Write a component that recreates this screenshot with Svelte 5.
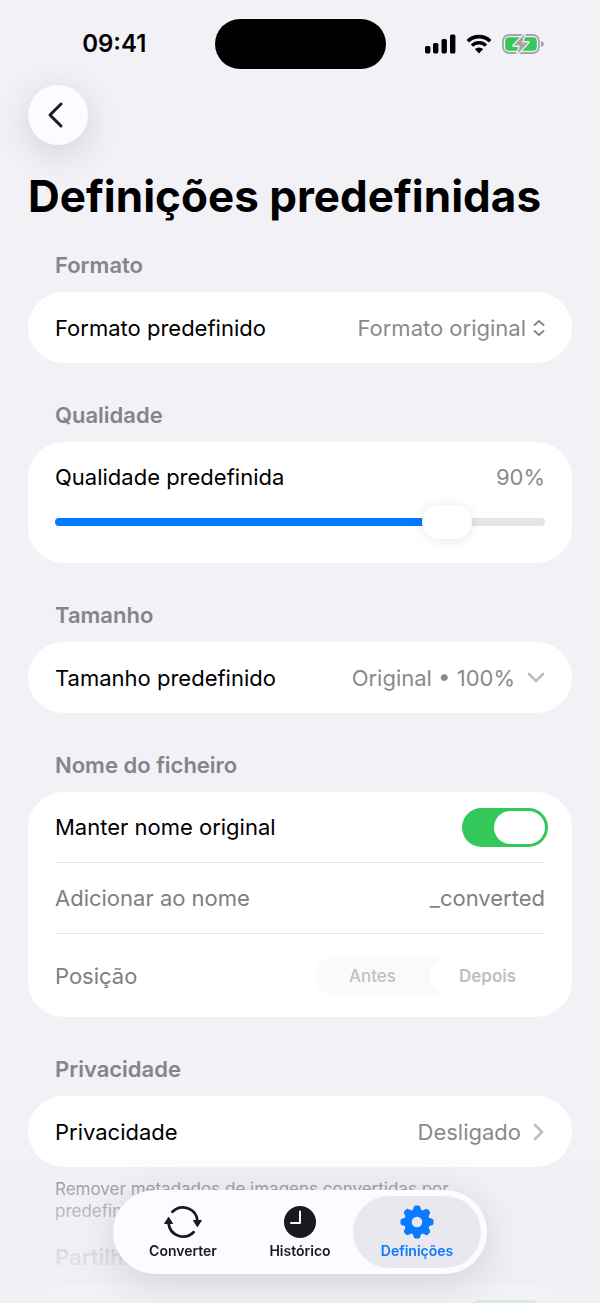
<script>
  let format = 'original';
  let quality = 90;
  let keepName = true;
  let suffix = '_converted';
  let position = 'after';
  let stripShared = true;

  const minQuality = 40;
  const maxQuality = 100;

  const teeth = [0, 45, 90, 135, 180, 225, 270, 315];

  $: filled = ((quality - minQuality) / (maxQuality - minQuality)) * 100;
</script>

<div class="screen">
  <div class="status">
    <span class="time">09:41</span>
    <div class="island"></div>
    <div class="indicators">
      <svg width="31" height="20" viewBox="0 0 31 20" aria-hidden="true">
        <rect x="0" y="12" width="5.4" height="7.4" rx="1.6" />
        <rect x="8" y="9" width="5.4" height="10.4" rx="1.6" />
        <rect x="16.5" y="5" width="5.4" height="14.4" rx="1.6" />
        <rect x="25" y="0.5" width="5.4" height="19" rx="1.6" />
      </svg>
      <svg width="26" height="20" viewBox="0 0 26 20" aria-hidden="true">
        <path d="M1.8 7.2a16 16 0 0 1 22.4 0" fill="none" stroke="#000" stroke-width="3.6" />
        <path d="M6 11.6a10 10 0 0 1 14 0" fill="none" stroke="#000" stroke-width="3.4" />
        <path d="M13 19.4l-4.2-4.3a6 6 0 0 1 8.4 0z" />
      </svg>
      <svg width="42" height="20" viewBox="0 0 42 20" aria-hidden="true">
        <rect x="1" y="1" width="36" height="18" rx="6" fill="none" stroke="#a5a5aa" stroke-width="1.8" />
        <path d="M39 7v6q3-1 3-3t-3-3z" fill="#a5a5aa" />
        <rect x="3.2" y="3.2" width="31.6" height="13.6" rx="4" fill="#34c759" />
        <path
          d="M22.5 0L11.5 11.6h6.3L15.5 20L26.5 8.4h-6.3z"
          fill="#a5a5aa"
          stroke="#f2f1f6"
          stroke-width="2.6"
          stroke-linejoin="round"
          paint-order="stroke"
        />
      </svg>
    </div>
  </div>

  <header>
    <button class="back" aria-label="Voltar">
      <svg width="18" height="28" viewBox="0 0 18 28" aria-hidden="true">
        <path d="M14 3L3 14l11 11" fill="none" stroke="#1a1a1e" stroke-width="3" stroke-linecap="round" stroke-linejoin="round" />
      </svg>
    </button>
    <h1>Definições predefinidas</h1>
  </header>

  <main>
    <section>
      <h2>Formato</h2>
      <div class="card">
        <div class="row">
          <label for="format">Formato predefinido</label>
          <div class="value picker">
            <select id="format" bind:value={format}>
              <option value="original">Formato original</option>
            </select>
            <svg width="12" height="18" viewBox="0 0 12 18" aria-hidden="true">
              <path d="M1.5 6L6 2l4.5 4M1.5 12L6 16l4.5-4" fill="none" stroke="currentColor" stroke-width="2" stroke-linecap="round" stroke-linejoin="round" />
            </svg>
          </div>
        </div>
      </div>
    </section>

    <section>
      <h2>Qualidade</h2>
      <div class="card quality">
        <div class="quality-head">
          <label for="quality">Qualidade predefinida</label>
          <output class="value" for="quality">{quality}%</output>
        </div>
        <input
          id="quality"
          class="slider"
          type="range"
          min={minQuality}
          max={maxQuality}
          bind:value={quality}
          style:--filled="{filled}%"
        />
      </div>
    </section>

    <section>
      <h2>Tamanho</h2>
      <div class="card">
        <button class="row">
          <span>Tamanho predefinido</span>
          <span class="value spaced">
            Original • 100%
            <svg width="18" height="12" viewBox="0 0 18 12" aria-hidden="true">
              <path d="M2 2l7 7 7-7" fill="none" stroke="#bdbdc1" stroke-width="2.5" stroke-linecap="round" stroke-linejoin="round" />
            </svg>
          </span>
        </button>
      </div>
    </section>

    <section>
      <h2>Nome do ficheiro</h2>
      <div class="card">
        <div class="row short">
          <label for="keep">Manter nome original</label>
          <input id="keep" class="toggle" type="checkbox" bind:checked={keepName} />
        </div>
        <div class="row" class:off={keepName}>
          <label for="suffix">Adicionar ao nome</label>
          <input id="suffix" class="suffix" type="text" bind:value={suffix} disabled={keepName} />
        </div>
        <div class="row tall" class:off={keepName}>
          <span id="position">Posição</span>
          <div class="segments" role="radiogroup" aria-labelledby="position">
            <label class:chosen={position === 'before'}>
              <input type="radio" value="before" bind:group={position} disabled={keepName} />
              Antes
            </label>
            <label class:chosen={position === 'after'}>
              <input type="radio" value="after" bind:group={position} disabled={keepName} />
              Depois
            </label>
          </div>
        </div>
      </div>
    </section>

    <section>
      <h2>Privacidade</h2>
      <div class="card">
        <a class="row" href="#privacidade">
          <span>Privacidade</span>
          <span class="value spaced">
            Desligado
            <svg width="12" height="18" viewBox="0 0 12 18" aria-hidden="true">
              <path d="M2 2l7 7-7 7" fill="none" stroke="#bdbdc1" stroke-width="2.5" stroke-linecap="round" stroke-linejoin="round" />
            </svg>
          </span>
        </a>
      </div>
      <p class="note">Remover metadados de imagens convertidas por predefinição.</p>
    </section>

    <section class="after-note">
      <h2 id="share">Partilha</h2>
      <div class="card">
        <div class="row end">
          <input class="toggle" type="checkbox" aria-labelledby="share" bind:checked={stripShared} />
        </div>
      </div>
    </section>
  </main>
</div>

<div class="fade"></div>

<nav class="tabs">
  <a href="#converter">
    <svg width="38" height="34" viewBox="0 0 38 34" aria-hidden="true">
      <path d="M8.5 6.8A14.6 14.6 0 0 1 33.4 15.5M4.6 18.5A14.6 14.6 0 0 0 29.5 27.2" fill="none" stroke="currentColor" stroke-width="2.8" stroke-linecap="round" />
      <path d="M29.4 15.5h8l-4 6.2zM0.600 18.5h8l-4-6.2z" fill="currentColor" stroke="currentColor" stroke-linejoin="round" />
    </svg>
    Converter
  </a>
  <a href="#historico">
    <svg width="34" height="34" viewBox="0 0 34 34" aria-hidden="true">
      <circle cx="17" cy="17" r="16" fill="currentColor" />
      <path d="M17 6.5V18H8" fill="none" stroke="#fcfbff" stroke-width="2" stroke-linecap="round" stroke-linejoin="round" />
    </svg>
    Histórico
  </a>
  <a href="#definicoes" class="active" aria-current="page">
    <svg width="34" height="34" viewBox="0 0 34 34" aria-hidden="true">
      <circle cx="17" cy="17" r="9" fill="none" stroke="currentColor" stroke-width="7.4" />
      {#each teeth as angle}
        <path d="M12.4 6L13.8 2Q14.3 0.5 15.6 0.5H18.4Q19.7 0.5 20.2 2L21.6 6z" fill="currentColor" transform="rotate({angle} 17 17)" />
      {/each}
    </svg>
    Definições
  </a>
</nav>

<style>
  :global(body) {
    margin: 0;
    background: #f2f1f6;
  }

  .screen {
    height: 100vh;
    overflow-y: auto;
    scrollbar-width: none;
    font-family: Inter, "Liberation Sans", sans-serif;
    font-size: 22px;
    line-height: 30px;
    color: #000;
  }

  button,
  input,
  select {
    font: inherit;
    color: inherit;
    margin: 0;
    border: none;
    background: none;
    box-sizing: border-box;
  }

  svg {
    flex: none;
    display: block;
  }

  /* Status bar */
  .status {
    display: grid;
    grid-template-columns: 1fr auto 1fr;
    align-items: center;
    justify-items: center;
    padding-top: 19px;
  }

  .time {
    padding-left: 14px;
    font-size: 24px;
    font-weight: 600;
  }

  .island {
    width: 171px;
    height: 50px;
    border-radius: 25px;
    background: #000;
  }

  .indicators {
    display: flex;
    gap: 10px;
    padding-right: 16px;
  }

  /* Header */
  header {
    padding: 16px 28px 0;
  }

  .back {
    display: flex;
    align-items: center;
    justify-content: center;
    width: 60px;
    height: 60px;
    padding: 0 4px 0 0;
    border-radius: 50%;
    background: #fcfbff;
    box-shadow: 0 8px 36px rgba(0, 0, 0, 0.14);
  }

  h1 {
    margin: 24px 0 0;
    font-size: 44px;
    line-height: 54px;
    font-weight: 700;
    white-space: nowrap;
  }

  /* Lists */
  main {
    padding: 27px 28px 140px;
  }

  section + section {
    margin-top: 37px;
  }

  section + .after-note {
    margin-top: 20px;
  }

  h2 {
    margin: 0 27px 12px;
    font-size: 22px;
    line-height: 30px;
    font-weight: 600;
    color: #85848a;
  }

  .card {
    padding: 0 27px;
    border-radius: 36px;
    background: #fff;
  }

  .row {
    display: flex;
    align-items: center;
    justify-content: space-between;
    width: 100%;
    height: 71px;
    padding: 0;
    box-sizing: border-box;
    color: #000;
    text-decoration: none;
  }

  .row + .row {
    border-top: 1px solid #e6e6e7;
  }

  .short {
    height: 70px;
  }

  .tall {
    height: 84px;
  }

  .end {
    justify-content: flex-end;
  }

  .off {
    color: #808080;
  }

  .value {
    color: #8a8a8d;
  }

  .picker,
  .spaced {
    display: flex;
    align-items: center;
    gap: 7px;
  }

  .spaced {
    gap: 12px;
  }

  select {
    appearance: none;
    padding: 0;
    text-align: right;
  }

  .suffix {
    width: 50%;
    padding: 0;
    text-align: right;
  }

  /* Slider */
  .quality {
    padding-top: 20px;
    padding-bottom: 24px;
  }

  .quality-head {
    display: flex;
    justify-content: space-between;
    margin-bottom: 13px;
  }

  .slider {
    appearance: none;
    display: block;
    width: 100%;
    height: 34px;
  }

  .slider::-webkit-slider-runnable-track {
    height: 8px;
    border-radius: 4px;
    background: linear-gradient(to right, #007aff var(--filled), #e5e5e6 var(--filled));
  }

  .slider::-webkit-slider-thumb {
    appearance: none;
    width: 50px;
    height: 34px;
    margin-top: -13px;
    border-radius: 17px;
    background: #fff;
    box-shadow: 0 1px 12px rgba(0, 0, 0, 0.1);
  }

  /* Switch */
  .toggle {
    appearance: none;
    display: flex;
    width: 86px;
    height: 39px;
    margin-right: -3px;
    padding: 3px;
    border-radius: 20px;
    background: #e5e5e6;
  }

  .toggle::before {
    content: "";
    width: 51px;
    border-radius: 17px;
    background: #fff;
  }

  .toggle:checked {
    justify-content: flex-end;
    background: #34c759;
  }

  /* Segmented control */
  .segments {
    display: grid;
    grid-template-columns: 1fr 1fr;
    width: 230px;
    border-radius: 20px;
    background: #fafafa;
    font-size: 17px;
    font-weight: 500;
    color: #c0c0c0;
    text-align: center;
  }

  .segments label {
    padding: 5px 0;
    border-radius: 20px;
  }

  .segments .chosen {
    background: #fff;
    font-weight: 600;
  }

  .segments input {
    position: absolute;
    opacity: 0;
  }

  .note {
    margin: 11px 27px 0;
    font-size: 17px;
    line-height: 22px;
    color: #85848a;
  }

  /* Tab bar */
  .fade {
    position: fixed;
    inset: auto 0 0;
    height: 150px;
    background: linear-gradient(to bottom, rgba(240, 239, 244, 0), rgba(240, 239, 244, 0.85) 70%, rgba(240, 239, 244, 0.88));
    pointer-events: none;
  }

  .tabs {
    position: fixed;
    bottom: 29px;
    left: 50%;
    transform: translateX(-50%);
    display: flex;
    padding: 6px;
    border-radius: 42px;
    background: #fcfbff;
    box-shadow: 0 8px 44px rgba(0, 0, 0, 0.13);
    font-family: Inter, "Liberation Sans", sans-serif;
  }

  .tabs a {
    display: flex;
    flex-direction: column;
    align-items: center;
    gap: 3px;
    width: 128px;
    height: 72px;
    padding-top: 9px;
    box-sizing: border-box;
    border-radius: 36px;
    font-size: 14px;
    line-height: 18px;
    font-weight: 600;
    color: #1a1a1e;
    text-decoration: none;
  }

  .tabs a + a {
    margin-left: -11px;
  }

  .tabs .active {
    background: #e9e8ee;
    color: #0a7aff;
  }
</style>
